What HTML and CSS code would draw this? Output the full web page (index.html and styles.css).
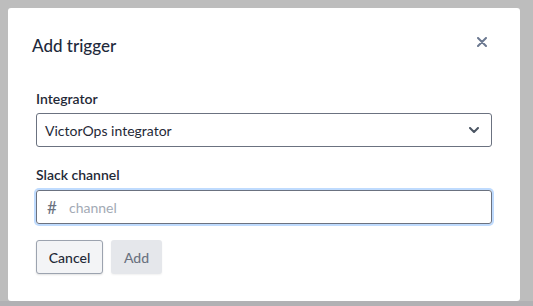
FILE: index.html
```html
<!DOCTYPE html>
<html>
<head>
<meta charset="utf-8">
<link rel="stylesheet" href="styles.css">
</head>
<body>
<div class="modal">
  <div class="header">
    <h2 class="title">Add trigger</h2>
    <button class="close" aria-label="Close">
      <svg width="10" height="10" viewBox="0 0 10 10"><path d="M1 1L9 9M9 1L1 9" stroke="#6b7890" stroke-width="2" stroke-linecap="round"/></svg>
    </button>
  </div>
  <div class="field">
    <label class="label">Integrator</label>
    <div class="select">
      <span class="select-text">VictorOps integrator</span>
      <svg class="chevron" width="10" height="6" viewBox="0 0 10 6"><path d="M1 1L5 5L9 1" fill="none" stroke="#4b5563" stroke-width="2" stroke-linecap="round" stroke-linejoin="round"/></svg>
    </div>
  </div>
  <div class="field second">
    <label class="label">Slack channel</label>
    <div class="input">
      <span class="hash">#</span>
      <span class="placeholder">channel</span>
    </div>
  </div>
  <div class="actions">
    <button class="btn cancel">Cancel</button>
    <button class="btn add">Add</button>
  </div>
</div>
<div class="bottom"></div>
</body>
</html>
```
FILE: styles.css
```css
html, body {
  margin: 0;
  padding: 0;
  background: #bdbdbd;
  font-family: "Lato", "Open Sans", sans-serif;
  overflow: hidden;
}
.modal {
  margin: 8px 13px 0 8px;
  height: 293px;
  box-sizing: border-box;
  background: #fff;
  border-radius: 3px;
  padding: 22px 28px 0 28px;
}
.header {
  display: flex;
  align-items: center;
  justify-content: space-between;
  margin-left: -4px;
  margin-right: 5px;
  height: 32px;
}
.title {
  margin: 0;
  font-size: 17px;
  font-weight: 500;
  color: #1e293b;
  line-height: 24px;
}
.close {
  border: 0;
  background: none;
  padding: 0;
  width: 10px;
  height: 10px;
  display: flex;
  margin-bottom: 8px;
}
.field {
  display: flex;
  flex-direction: column;
  margin-top: 27px;
}
.field.second {
  margin-top: 18px;
}
.label {
  font-size: 14px;
  font-weight: 600;
  color: #1f2937;
  line-height: 20px;
  margin-bottom: 4px;
}
.field.second .label {
  margin-bottom: 5px;
}
.select, .input {
  height: 34px;
  box-sizing: border-box;
  border: 1px solid #6b7280;
  border-radius: 3px;
  display: flex;
  align-items: center;
  font-size: 14px;
}
.select {
  padding: 0 12px 0 8px;
  justify-content: space-between;
  color: #1f2937;
}
.input {
  padding: 0 10px;
  box-shadow: 0 0 0 2px #bfdbfe;
}
.hash {
  color: #6b7280;
  font-size: 17px;
  width: 22px;
}
.placeholder {
  color: #a3aab5;
}
.actions {
  display: flex;
  gap: 8px;
  margin-top: 16px;
}
.btn {
  height: 34px;
  font-family: inherit;
  font-size: 14px;
  font-weight: 500;
  border-radius: 3px;
  padding: 0;
}
.cancel {
  width: 67px;
  background: #f3f4f6;
  border: 1px solid #9ca3af;
  color: #1f2937;
  box-shadow: 0 1px 2px rgba(0,0,0,0.12);
}
.add {
  width: 51px;
  background: #e5e7eb;
  border: 0;
  color: #6b7280;
  box-shadow: 0 1px 2px rgba(0,0,0,0.06);
}
.bottom {
  height: 5px;
  background: #b1b1b4;
}
```
